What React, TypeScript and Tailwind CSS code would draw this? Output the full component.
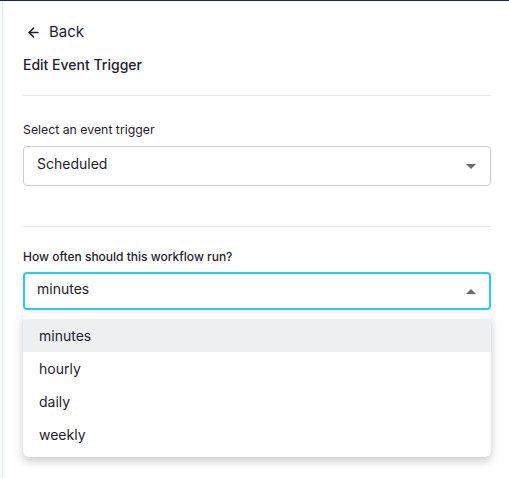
import { ArrowLeft } from 'lucide-react';

const Caret = ({ up }: { up?: boolean }) => (
  <svg width="10" height="5" viewBox="0 0 10 5" className="text-[#6b6b6b]">
    <path d={up ? 'M0 5 L5 0 L10 5 Z' : 'M0 0 L5 5 L10 0 Z'} fill="currentColor" />
  </svg>
);

const options = ['minutes', 'hourly', 'daily', 'weekly'];

const App = () => {
  return (
    <div
      className="relative flex h-[478px] w-full overflow-hidden bg-white text-[#1f2230]"
      style={{ fontFamily: 'Inter, "Noto Sans", sans-serif' }}
    >
      <div className="absolute inset-x-0 top-0 h-[1px] bg-[#1f2937] shadow-[0_1px_8px_rgba(0,0,0,0.12)]" />
      <div className="w-[2px] bg-[#fafbfc]" />
      <div className="w-[1px] bg-[#e3e9f0]" />

      <div className="flex w-[488px] flex-col pl-[20px] pt-[22px]">
        <button className="flex h-[20px] items-center gap-[8px] pl-[3px] text-[15px]">
          <ArrowLeft size={15} strokeWidth={2.3} />
          <span>Back</span>
        </button>
        <h2 className="mt-[13px] h-[20px] text-[14px] font-medium leading-[20px]">Edit Event Trigger</h2>
        <div className="mt-[20px] h-[1px] bg-[#e5e9ef]" />

        <label className="mt-[25px] h-[18px] text-[12.3px] leading-[18px]">Select an event trigger</label>
        <div className="mt-[7px] flex h-[40px] items-center justify-between rounded-[4px] border border-[#c9ccd1] pl-[13px] pr-[14px]">
          <span className="mb-[5px] text-[14px]">Scheduled</span>
          <Caret />
        </div>

        <div className="mt-[40px] h-[1px] bg-[#e5e9ef]" />

        <label className="mt-[21px] h-[18px] text-[12px] font-medium leading-[18px]">
          How often should this workflow run?
        </label>
        <div className="mt-[6px] flex h-[38px] items-center justify-between rounded-[4px] border-2 border-[#22d0ea] pl-[12px] pr-[13px]">
          <span className="mb-[5px] text-[14px]">minutes</span>
          <Caret up />
        </div>

        <div className="relative mt-[3px]">
          <div className="absolute inset-x-0 top-0 rounded-[6px] bg-white py-[6px] shadow-[0_4px_10px_rgba(0,0,0,0.22)]">
            {options.map((o, i) => (
              <div
                key={o}
                className={
                  'flex h-[33px] items-center pl-[16px] text-[14px]' + (i === 0 ? ' bg-[#eeeff1]' : '')
                }
              >
                {o}
              </div>
            ))}
          </div>
        </div>
      </div>
    </div>
  );
};

export default App;
